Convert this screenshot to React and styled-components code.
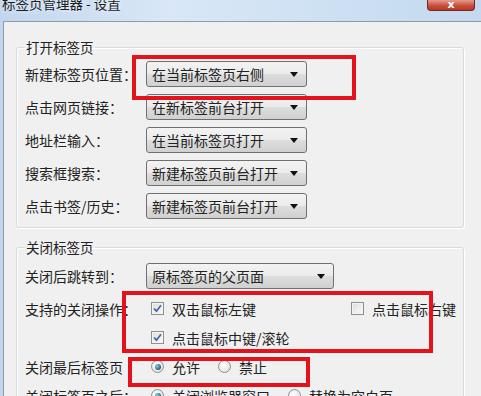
import styled, {createGlobalStyle} from 'styled-components';

const GlobalStyle = createGlobalStyle`
  html, body {
    margin: 0;
    padding: 0;
    background: #f0f0f0;
  }
  body {
    font-family: "Noto Sans CJK SC", "Noto Sans", sans-serif;
    color: #222;
  }
`;

const Window = styled.div`
  position: relative;
  width: 481px;
  height: 396px;
  overflow: hidden;
  display: flex;
  flex-direction: column;
  padding-left: 3px;
  box-sizing: border-box;
  background: linear-gradient(90deg, #c1d6ee 0%, #d9e7f6 35%, #cde0f3 70%, #c4d9ef 100%);
`;

const TitleBar = styled.div`
  height: 21px;
  display: flex;
  align-items: flex-start;
  justify-content: space-between;
  flex-shrink: 0;
`;

const Title = styled.div`
  font-size: 13.5px;
  line-height: 18px;
  margin-top: -6px;
  margin-left: -1px;
  color: #1c1c1c;
  text-shadow: 0 0 6px rgba(255, 255, 255, 0.9);
`;

const CloseButton = styled.div`
  width: 46px;
  height: 10px;
  margin-right: 6px;
  border: 1px solid #6d2b22;
  border-top: none;
  border-radius: 0 0 4px 4px;
  background: linear-gradient(#e59b8c, #c74a36 60%, #b83a25);
  display: flex;
  align-items: flex-end;
  justify-content: center;
  color: #fff;
  font-family: "DejaVu Sans", sans-serif;
  font-size: 11px;
  font-weight: bold;
  line-height: 10px;
  overflow: hidden;
`;

const Client = styled.div`
  flex: 1;
  background: #f0f0f0;
  border-top: 1px solid #8c9bab;
  border-left: 1px solid #8c9bab;
  padding: 0 12px;
`;

const Group = styled.fieldset`
  margin: ${(p) => p.$top}px 0 0 0;
  width: 448px;
  box-sizing: border-box;
  border: 1px solid #d5dde3;
  border-radius: 3px;
  box-shadow: inset 1px 1px 0 #fff, 1px 1px 0 #fff;
  padding: ${(p) => p.$padTop}px 8px 8px 8px;
  min-inline-size: 0;
`;

const Legend = styled.legend`
  font-size: 13.5px;
  line-height: 18px;
  padding: 0 1px;
  margin-left: 0;
`;

const Form = styled.div`
  display: grid;
  grid-template-columns: 121px 1fr;
  grid-template-rows: ${(p) => p.$rows};
  row-gap: ${(p) => p.$gap}px;
  align-items: center;
`;

const Label = styled.div`
  font-size: 14px;
  line-height: 18px;
  white-space: nowrap;
  align-self: ${(p) => (p.$top ? 'start' : 'center')};
  ${(p) => p.$top && 'margin-top: 4px;'}
`;

const Select = styled.div`
  width: ${(p) => p.$width}px;
  height: 26px;
  box-sizing: border-box;
  border: 1px solid #707070;
  border-radius: 3px;
  background: linear-gradient(#f3f3f3 0%, #ebebeb 48%, #dddddd 52%, #d0d0d0 100%);
  display: flex;
  align-items: center;
  justify-content: space-between;
  padding: 0 8px 0 5px;
  font-size: 14px;
  line-height: 18px;
  align-self: ${(p) => (p.$top ? 'start' : 'center')};
`;

const Arrow = styled.span`
  width: 0;
  height: 0;
  border-left: 4px solid transparent;
  border-right: 4px solid transparent;
  border-top: 5px solid #111;
`;

const Options = styled.div`
  display: grid;
  grid-template-columns: ${(p) => p.$cols};
  align-items: center;
  padding-left: 5px;
`;

const Option = styled.div`
  display: flex;
  align-items: center;
  gap: 8px;
  font-size: 14px;
  line-height: 18px;
  white-space: nowrap;
`;

const Check = styled.span`
  width: 13px;
  height: 13px;
  box-sizing: border-box;
  border: 1px solid #8e8f8f;
  background: linear-gradient(135deg, #dcdcdc, #fbfbfb);
  box-shadow: inset 0 0 0 1px #f4f4f4;
  display: flex;
  align-items: center;
  justify-content: center;
  flex-shrink: 0;
`;

const Radio = styled.span`
  width: 13px;
  height: 13px;
  box-sizing: border-box;
  border-radius: 50%;
  border: 1px solid #8e8f8f;
  background: radial-gradient(circle at 40% 40%, #ffffff, #d8d8d8);
  display: flex;
  align-items: center;
  justify-content: center;
  flex-shrink: 0;

  &::after {
    content: '';
    display: ${(p) => (p.$on ? 'block' : 'none')};
    width: 6px;
    height: 6px;
    border-radius: 50%;
    background: radial-gradient(circle at 35% 35%, #8fd0e8, #1f5f7c 70%);
  }
`;

const Mark = styled.div`
  position: absolute;
  left: ${(p) => p.$x}px;
  top: ${(p) => p.$y}px;
  width: ${(p) => p.$w}px;
  height: ${(p) => p.$h}px;
  box-sizing: border-box;
  border: 4px solid #e3121b;
  pointer-events: none;
`;

const Tick = () => (
  <svg width="9" height="9" viewBox="0 0 9 9">
    <path d="M1 4.5 L3.5 7.2 L8 1.3" fill="none" stroke="#4766a3" strokeWidth="1.8" />
  </svg>
);

const Dropdown = ({width, children, top}) => (
  <Select $width={width} $top={top}>
    <span>{children}</span>
    <Arrow />
  </Select>
);

const CheckItem = ({checked, children}) => (
  <Option>
    <Check>{checked && <Tick />}</Check>
    {children}
  </Option>
);

const RadioItem = ({on, children}) => (
  <Option>
    <Radio $on={on} />
    {children}
  </Option>
);

const openRows = [
  ['新建标签页位置：', '在当前标签页右侧'],
  ['点击网页链接：', '在新标签前台打开'],
  ['地址栏输入：', '在当前标签页打开'],
  ['搜索框搜索：', '新建标签页前台打开'],
  ['点击书签/历史：', '新建标签页前台打开'],
];

export default function App() {
  return (
    <>
      <GlobalStyle />
      <Window>
        <TitleBar>
          <Title>标签页管理器 - 设置</Title>
          <CloseButton>x</CloseButton>
        </TitleBar>
        <Client>
          <Group $top={16} $padTop={5}>
            <Legend>打开标签页</Legend>
            <Form $rows="repeat(5, 26px)" $gap={7}>
              {openRows.map(([label, value]) => [
                <Label key={label}>{label}</Label>,
                <Dropdown key={label + '-select'} width={161}>
                  {value}
                </Dropdown>,
              ])}
            </Form>
          </Group>
          <Group $top={10} $padTop={7}>
            <Legend>关闭标签页</Legend>
            <Form $rows="31px repeat(4, 29px)" $gap={0}>
              <Label $top>关闭后跳转到：</Label>
              <Dropdown width={188} top>
                原标签页的父页面
              </Dropdown>
              <Label>支持的关闭操作：</Label>
              <Options $cols="200px auto">
                <CheckItem checked>双击鼠标左键</CheckItem>
                <CheckItem>点击鼠标右键</CheckItem>
              </Options>
              <Label />
              <Options $cols="200px auto">
                <CheckItem checked>点击鼠标中键/滚轮</CheckItem>
              </Options>
              <Label>关闭最后标签页</Label>
              <Options $cols="67px auto">
                <RadioItem on>允许</RadioItem>
                <RadioItem>禁止</RadioItem>
              </Options>
              <Label>关闭标签页之后：</Label>
              <Options $cols="137px auto">
                <RadioItem on>关闭浏览器窗口</RadioItem>
                <RadioItem>替换为空白页</RadioItem>
              </Options>
            </Form>
          </Group>
        </Client>
        <Mark $x={132} $y={55} $w={224} $h={45} />
        <Mark $x={122} $y={291} $w={311} $h={62} />
        <Mark $x={128} $y={357} $w={182} $h={30} />
      </Window>
    </>
  );
}
